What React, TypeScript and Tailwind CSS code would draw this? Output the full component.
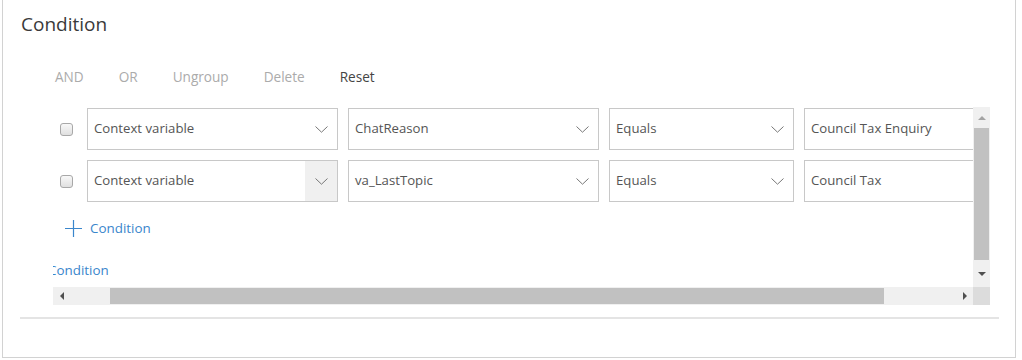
import React from 'react';

const Chevron = () => (
  <svg width="13" height="7" viewBox="0 0 13 7" fill="none">
    <path d="M0.5 0.5 L6.5 6.2 L12.5 0.5" stroke="#777" strokeWidth="1" />
  </svg>
);

const Checkbox = () => (
  <div className="w-[13px] h-[13px] shrink-0 rounded-[3px] border border-[#a8a8a8] bg-gradient-to-b from-[#f8f8f8] to-[#e0e0e0]"></div>
);

const Select = ({ value, width, hover }: { value: string; width: string; hover?: boolean }) => (
  <div className={`${width} h-[42px] shrink-0 flex items-center border border-[#c8c8c8] bg-white`}>
    <span className="flex-1 pl-[6px] text-[13.2px] text-[#555] truncate">{value}</span>
    <div className={`w-[32px] h-full flex items-center justify-center ${hover ? 'bg-[#f0f0f0]' : ''}`}>
      <Chevron />
    </div>
  </div>
);

const TextBox = ({ value }: { value: string }) => (
  <div className="w-[200px] h-[42px] shrink-0 flex items-center border border-[#c8c8c8] bg-white">
    <span className="pl-[6px] text-[13.2px] text-[#555] whitespace-nowrap">{value}</span>
  </div>
);

const rows = [
  { source: 'Context variable', field: 'ChatReason', op: 'Equals', value: 'Council Tax Enquiry', hover: false },
  { source: 'Context variable', field: 'va_LastTopic', op: 'Equals', value: 'Council Tax', hover: true },
];

const App = () => {
  return (
    <div className="w-[1022px] h-[360px] bg-white font-['Open_Sans',sans-serif] overflow-hidden">
      <div className="ml-[2px] w-[1014px] h-[358px] border-l border-r border-b border-[#d2d2d2] px-[17px]">
        {/* Title */}
        <h1 className="pt-[12px] text-[19px] leading-[24px] text-[#3a3a3a] pl-[1px]">Condition</h1>

        {/* Toolbar */}
        <div className="mt-[31px] ml-[35px] flex gap-[35px] text-[13.6px] leading-[20px]">
          <span className="text-[#ababab]">AND</span>
          <span className="text-[#ababab]">OR</span>
          <span className="text-[#ababab]">Ungroup</span>
          <span className="text-[#ababab]">Delete</span>
          <span className="text-[#444]">Reset</span>
        </div>

        {/* Scroll region */}
        <div className="mt-[20px] ml-[33px] w-[937px] h-[198px] grid grid-cols-[1fr_17px] grid-rows-[1fr_18px]">
          <div className="overflow-hidden">
            <div className="pt-[1px] pl-[7px] flex flex-col gap-[10px]">
              {rows.map((row, i) => (
                <div key={i} className="flex items-center">
                  <Checkbox />
                  <div className="ml-[14px] flex gap-[10px]">
                    <Select value={row.source} width="w-[251px]" hover={row.hover} />
                    <Select value={row.field} width="w-[251px]" />
                    <Select value={row.op} width="w-[185px]" />
                    <TextBox value={row.value} />
                  </div>
                </div>
              ))}
            </div>
            <div className="mt-[16px] ml-[12px] flex items-center gap-[8px] text-[#3a86cc]">
              <svg width="17" height="17" viewBox="0 0 17 17" fill="none">
                <path d="M8.5 0 V17 M0 8.5 H17" stroke="#3a86cc" strokeWidth="1.2" />
              </svg>
              <span className="text-[13.4px] leading-[20px]">Condition</span>
            </div>
            <div className="mt-[22px] ml-[-5px] text-[13.4px] leading-[20px] text-[#3a86cc]">Condition</div>
          </div>

          {/* Vertical scrollbar */}
          <div className="bg-[#f0f0f0] flex flex-col">
            <div className="h-[21px] flex items-center justify-center">
              <div className="w-0 h-0 border-l-[4px] border-r-[4px] border-b-[4px] border-l-transparent border-r-transparent border-b-[#a3a3a3]"></div>
            </div>
            <div className="h-[132px] mx-px bg-[#c1c1c1]"></div>
            <div className="flex-1 flex items-center justify-center">
              <div className="w-0 h-0 border-l-[4px] border-r-[4px] border-t-[4px] border-l-transparent border-r-transparent border-t-[#505050]"></div>
            </div>
          </div>

          {/* Horizontal scrollbar */}
          <div className="bg-[#f0f0f0] flex items-center">
            <div className="w-[17px] h-full flex items-center justify-center">
              <div className="w-0 h-0 border-t-[4px] border-b-[4px] border-r-[4px] border-t-transparent border-b-transparent border-r-[#505050]"></div>
            </div>
            <div className="ml-[40px] w-[774px] h-[16px] bg-[#c1c1c1]"></div>
            <div className="ml-auto w-[17px] h-full flex items-center justify-center">
              <div className="w-0 h-0 border-t-[4px] border-b-[4px] border-l-[4px] border-t-transparent border-b-transparent border-l-[#505050]"></div>
            </div>
          </div>
          <div className="bg-[#dcdcdc]"></div>
        </div>

        {/* Separator */}
        <div className="mt-[12px] w-[979px] h-[2px] bg-[#e4e4e4]"></div>
      </div>
    </div>
  );
};

export default App;
